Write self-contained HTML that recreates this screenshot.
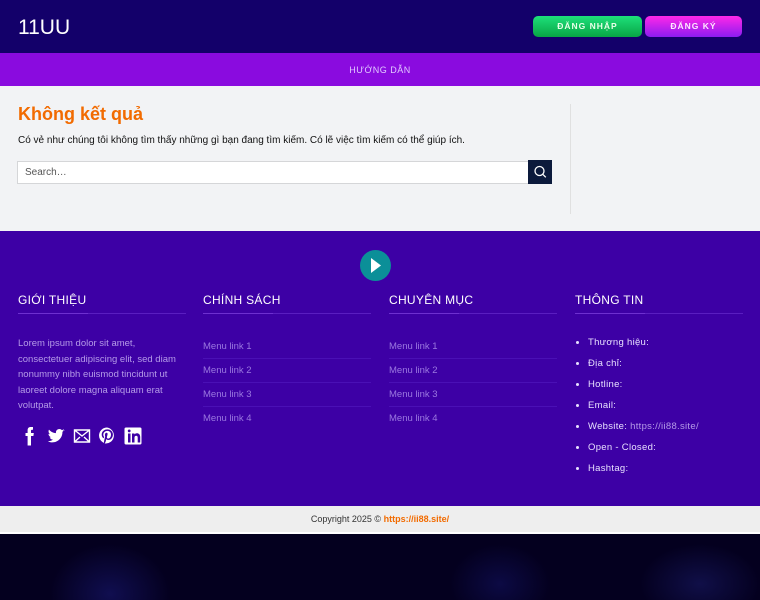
<!DOCTYPE html>
<html><head><meta charset="utf-8"><style>
*{margin:0;padding:0;box-sizing:border-box}
body{width:760px;height:600px;overflow:hidden;font-family:"Liberation Sans","Noto Sans CJK SC",sans-serif;background:#05002a}
.hdr{position:absolute;top:0;left:0;width:760px;height:53px;background:#13006a}
.logo{position:absolute;left:18px;top:16px;color:#fff;font-size:21px}
.btn{position:absolute;top:16px;height:21px;border-radius:5px;color:#e8ffe8;font-size:8.5px;letter-spacing:1px;text-align:center;line-height:21px;font-weight:bold}
.nav{position:absolute;top:53px;left:0;width:760px;height:33px;background:#8a0bdf;color:#e0c8ff;font-size:9px;text-align:center;line-height:35px;letter-spacing:.5px}
.main{position:absolute;top:86px;left:0;width:760px;height:145px;background:#f2f3f5}
h1{position:absolute;left:18px;top:104px;color:#f26b00;font-size:18px;font-weight:bold}
.p{position:absolute;left:18px;top:135px;font-size:10px;color:#111}
.search{position:absolute;left:17px;top:161px;width:512px;height:23px;background:#fff;border:1px solid #d5d6d8;font-size:10px;color:#555;padding:5px 7px}
.sbtn{position:absolute;left:528px;top:160px;width:24px;height:24px;background:#0c1a3c}
.vline{position:absolute;left:570px;top:104px;width:1px;height:110px;background:#e0e0e0}
.ft{position:absolute;top:231px;left:0;width:760px;height:275px;background:#3d00a5}
.col{position:absolute;top:293px;width:168px}
.col h3{color:#fff;font-size:12px;font-weight:normal;letter-spacing:.3px;height:21px;border-bottom:1px solid #5a1ec0;position:relative}
.col h3:after{content:"";position:absolute;left:0;bottom:-1px;width:70px;height:1px;background:#6e30d0}
.lorem{color:#b59ae8;font-size:9.5px;line-height:15.5px;margin-top:22px}
.ml{color:#9b78e0;font-size:9.5px;margin-top:21px}
.ml div{height:24px;border-bottom:1px solid #4a10b5;padding-top:6px}
.info{color:#e8e0ff;font-size:9.5px;margin-top:23px;padding-left:13px;letter-spacing:.3px}
.info li{height:21px}
.copy{position:absolute;top:506px;left:0;width:760px;height:28px;background:#eeeeee;border-bottom:2px solid #fff;text-align:center;font-size:9px;line-height:26px;color:#333}
.bot{position:absolute;top:534px;left:0;width:760px;height:66px;background:radial-gradient(ellipse 60px 50px at 110px 60px,#100e50,transparent),radial-gradient(ellipse 60px 40px at 700px 50px,#100f48,transparent),radial-gradient(ellipse 50px 40px at 500px 50px,#0c0a44,transparent),#04001f}
.ic{position:absolute;top:426px}
</style></head><body>
<div class="hdr"><div class="logo">11UU</div>
<div class="btn" style="left:533px;width:109px;background:linear-gradient(#1ee07a,#08a545)">ĐĂNG NHẬP</div>
<div class="btn" style="left:645px;width:97px;background:linear-gradient(#ff28e8,#8c1cf0);color:#ffe8ff">ĐĂNG KÝ</div></div>
<div class="nav">HƯỚNG DẪN</div>
<div class="main"></div>
<h1>Không kết quả</h1>
<div class="p">Có vẻ như chúng tôi không tìm thấy những gì bạn đang tìm kiếm. Có lẽ việc tìm kiếm có thể giúp ích.</div>
<div class="search">Search…</div>
<div class="sbtn"><svg width="24" height="24"><circle cx="11.5" cy="11" r="4.5" stroke="#fff" stroke-width="1.3" fill="none"/><path d="M14.8 14.3l3 3" stroke="#fff" stroke-width="1.3"/></svg></div>
<div class="vline"></div>
<div class="ft"></div>
<svg style="position:absolute;left:360px;top:250px" width="31" height="31"><circle cx="15.5" cy="15.5" r="15.5" fill="#0b8f98"/><path d="M11 8v15l10-7.5z" fill="#fff"/></svg>
<div class="col" style="left:18px"><h3>GIỚI THIỆU</h3><div class="lorem">Lorem ipsum dolor sit amet, consectetuer adipiscing elit, sed diam nonummy nibh euismod tincidunt ut laoreet dolore magna aliquam erat volutpat.</div></div>
<svg class="ic" style="left:23px" width="14" height="20" fill="#fff"><path d="M10 1H7.8C5.6 1 4.6 2.3 4.6 4.3V7H2.5v3h2.1v9.5H8V10h2.4l.4-3H8V4.8c0-.7.3-1.1 1.1-1.1H10z"/></svg>
<svg class="ic" style="left:47px" width="18" height="20" fill="#fff"><path d="M17.5 4.5c-.6.3-1.3.5-2 .6.7-.4 1.3-1.1 1.6-1.9-.7.4-1.4.7-2.3.9C14.2 3.4 13.3 3 12.3 3c-2.1 0-3.8 2-3.3 4.1-2.7-.1-5.3-1.4-7-3.5-.9 1.5-.4 3.5 1.1 4.5-.6 0-1.1-.1-1.600-.4 0 1.7 1.2 3.1 2.8 3.4-.5.2-1.1.2-1.6.1.4 1.4 1.8 2.4 3.3 2.4-1.4 1.1-3.200 1.7-5.2 1.5 1.3.8 2.9 1.3 4.5 1.3 6.5 0 10.4-5.6 10.1-10.5.7-.5 1.3-1.1 1.8-1.9z"/></svg>
<svg class="ic" style="left:73px" width="18" height="20"><path d="M1.5 4h15v12h-15z M1.5 4l7.5 6 7.5-6 M1.5 16l5.5-5 M16.5 16l-5.5-5" stroke="#fff" stroke-width="1.4" fill="none"/></svg>
<svg class="ic" style="left:98px" width="18" height="20" fill="#fff"><path d="M9 1.5a8 8 0 0 0-3 15.4c0-.7 0-1.7.2-2.4l1-4.3s-.3-.5-.3-1.3c0-1.2.7-2.1 1.6-2.1.8 0 1.1.6 1.1 1.2 0 .8-.5 2-.7 3-.2.9.4 1.6 1.3 1.6 1.6 0 2.8-1.7 2.8-4.1 0-2.1-1.5-3.6-3.7-3.600-2.5 0-4 1.9-4 3.8 0 .8.3 1.6.7 2l.1.3-.3 1c0 .2-.1.2-.3.1-1.1-.5-1.8-2.1-1.8-3.4 0-2.8 2-5.3 5.8-5.3 3 0 5.4 2.2 5.4 5.1 0 3-1.9 5.5-4.6 5.5-.9 0-1.7-.5-2-1l-.5 2.1c-.2.8-.7 1.7-1.1 2.3A8 8 0 1 0 9 1.5z"/></svg>
<svg class="ic" style="left:124px" width="19" height="20" fill="#fff"><path d="M2 1.5h14a1.5 1.5 0 0 1 1.5 1.5v14a1.5 1.5 0 0 1-1.5 1.5H2A1.5 1.5 0 0 1 .5 17V3A1.5 1.5 0 0 1 2 1.5zm2 6v9h2.5v-9zm1.2-4a1.4 1.4 0 1 0 0 2.8 1.4 1.4 0 0 0 0-2.8zM8 7.5v9h2.5v-5c0-1.2 1-1.7 1.7-1.7s1.5.4 1.5 1.7v5h2.5V11c0-2.5-1.5-3.7-3.3-3.7-1.2 0-2 .6-2.4 1.2V7.5z"/></svg>
<div class="col" style="left:203px"><h3>CHÍNH SÁCH</h3><div class="ml"><div>Menu link 1</div><div>Menu link 2</div><div>Menu link 3</div><div style="border:0">Menu link 4</div></div></div>
<div class="col" style="left:389px"><h3>CHUYÊN MỤC</h3><div class="ml"><div>Menu link 1</div><div>Menu link 2</div><div>Menu link 3</div><div style="border:0">Menu link 4</div></div></div>
<div class="col" style="left:575px"><h3>THÔNG TIN</h3><ul class="info"><li>Thương hiệu:</li><li>Địa chỉ:</li><li>Hotline:</li><li>Email:</li><li>Website: <span style="color:#b59ae8">https://ii88.site/</span></li><li>Open - Closed:</li><li>Hashtag:</li></ul></div>
<div class="copy">Copyright 2025 © <b style="color:#f26b00">https://ii88.site/</b></div>
<div class="bot"></div>
</body></html>
